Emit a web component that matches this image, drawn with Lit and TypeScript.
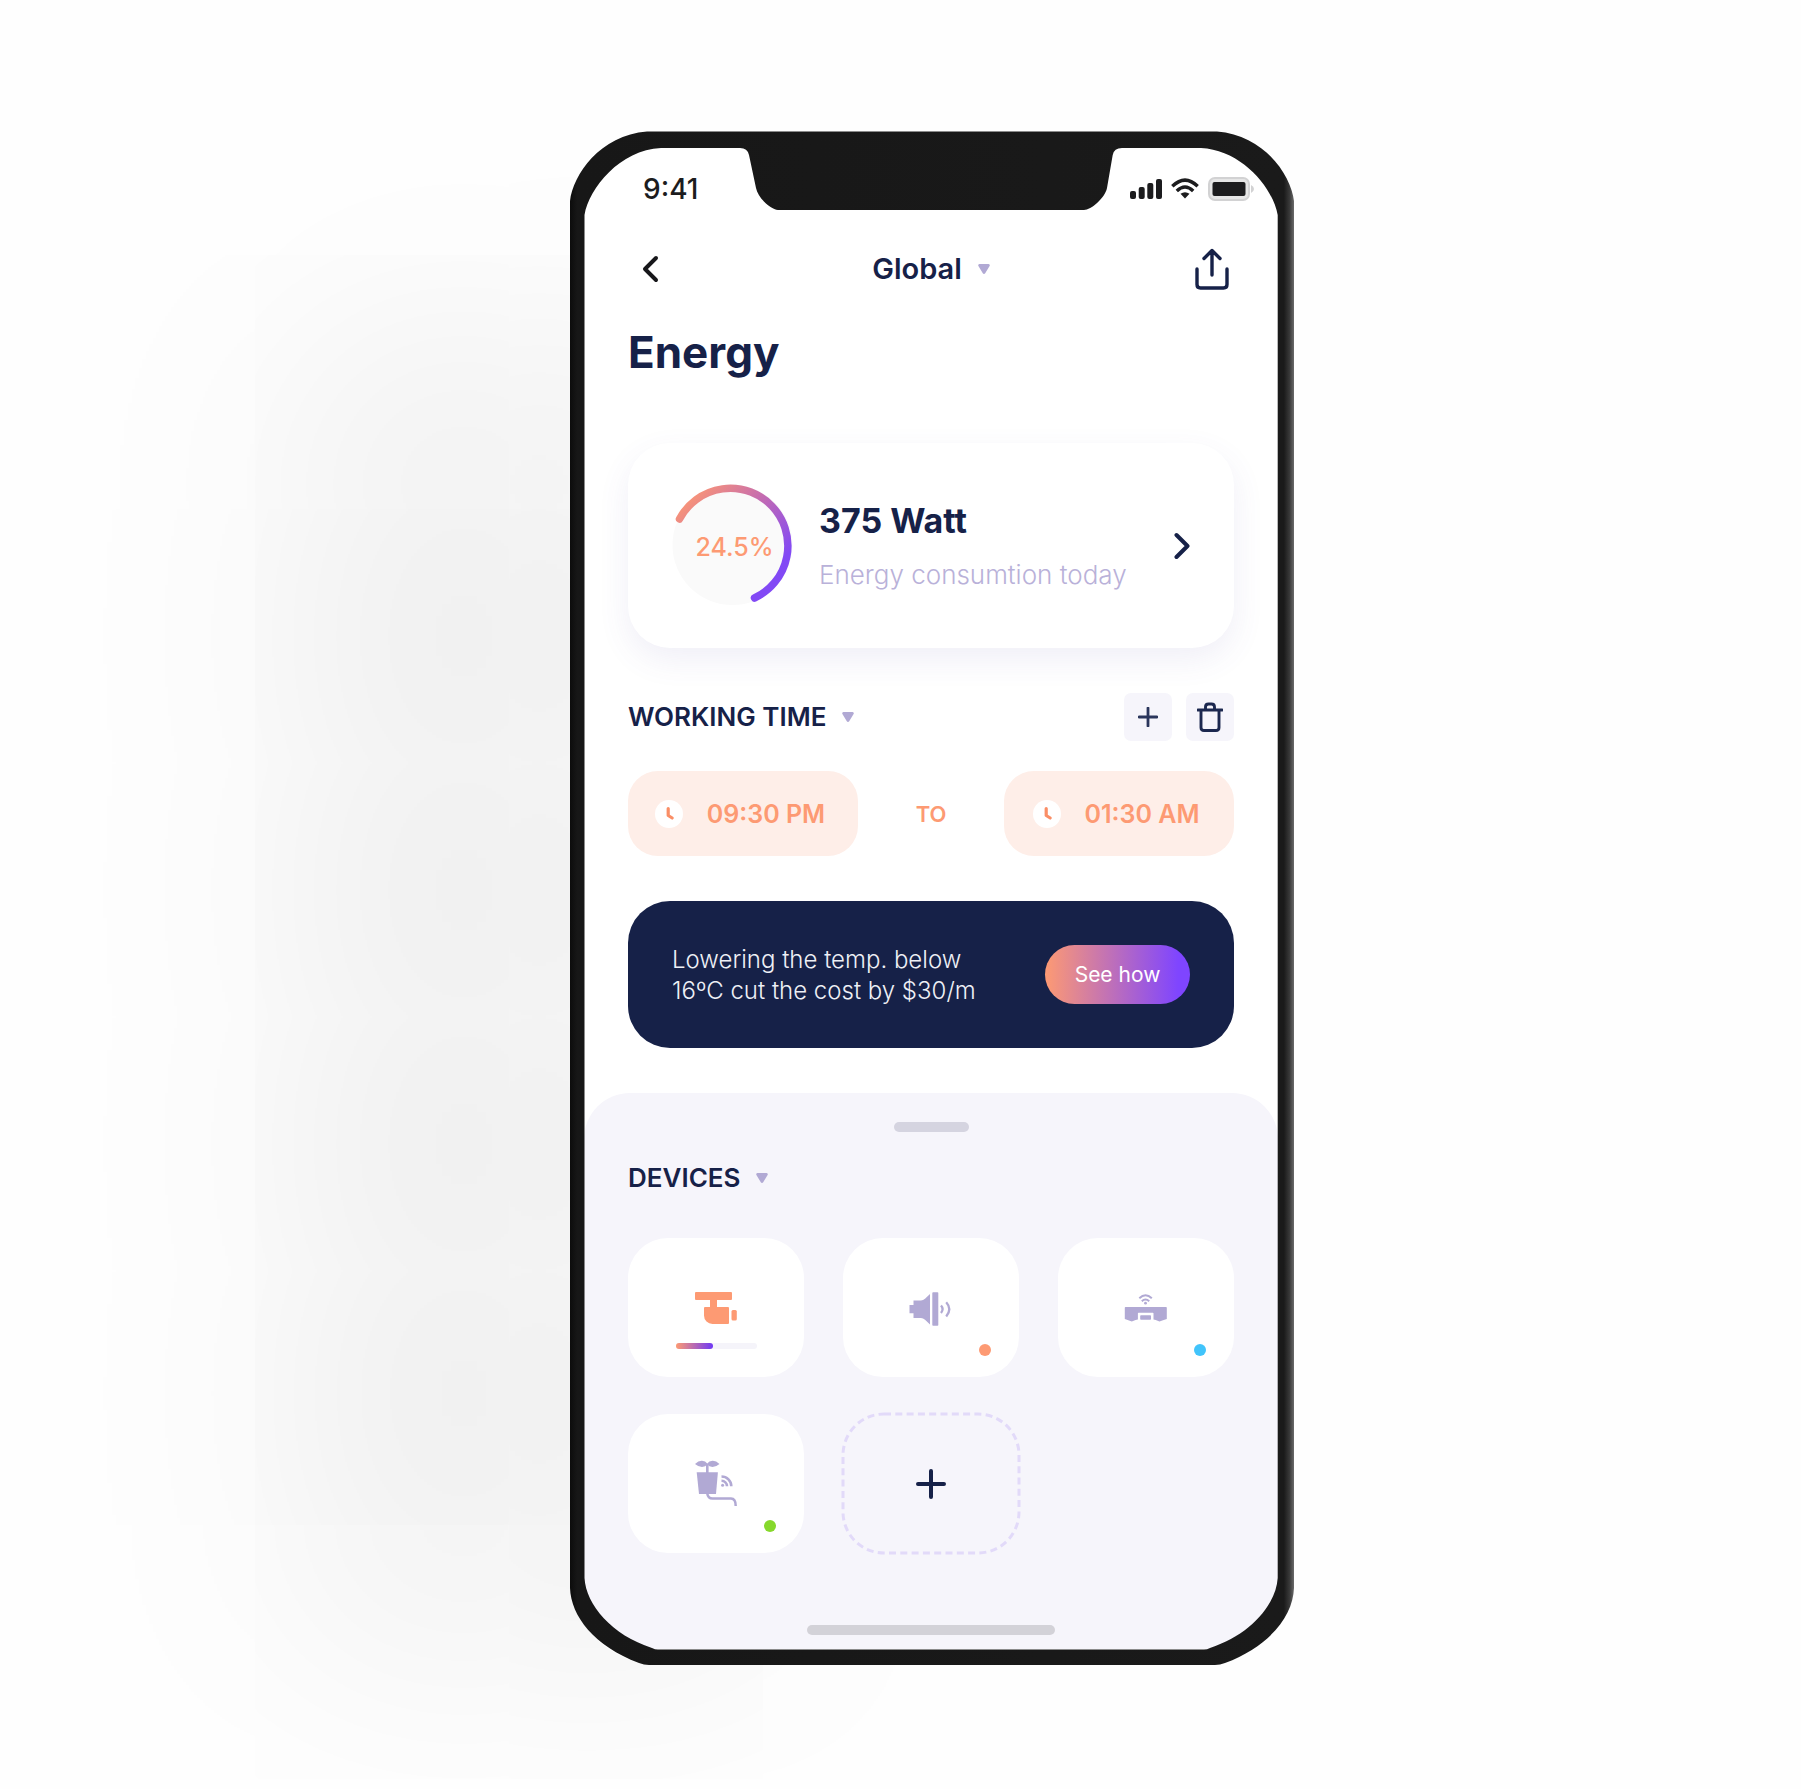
import { LitElement, html, css, svg, nothing } from "lit";
import type { TemplateResult } from "lit";
import { customElement, property } from "lit/decorators.js";

interface Device {
  name: string;
  icon: TemplateResult;
  tone: "active" | "idle";
  dot?: "orange" | "blue" | "green";
  progress?: number;
}

const caret = html`<svg class="caret" viewBox="0 0 12 10" width="12" height="10" aria-hidden="true">
  <path d="M1.5 0h9a1.3 1.3 0 0 1 1.1 2L7.2 9.2a1.4 1.4 0 0 1-2.4 0L.4 2A1.3 1.3 0 0 1 1.5 0z" fill="currentColor" />
</svg>`;

const cameraIcon = svg`
  <g fill="currentColor">
    <rect x="1" y="8" width="37" height="8" rx="1" />
    <rect x="16" y="15" width="7" height="9" />
    <path d="M10 24a1 1 0 0 1 1-1h23a1 1 0 0 1 1 1v15a1 1 0 0 1-1 1H18.500a8.500 8.500 0 0 1-8.500-8.500z" />
    <rect x="37.500" y="26" width="5.300" height="10.500" rx="1.500" />
  </g>`;

const speakerIcon = svg`
  <path d="M.5 21h4v-4.500h7.500q2 0 4-1.800l5-4.700v30.500l-5-4.700q-2-1.800-4-1.800H4.500V29.300h-4z" fill="currentColor" />
  <rect x="23.300" y="8.300" width="6" height="33.400" rx=".8" fill="currentColor" />
  <path d="M32 21.500q3.200 3.500 0 7.500M37.200 18.200q6.200 6.800 0 14.200" fill="none" stroke="currentColor" stroke-width="2.300" />`;

const vacuumIcon = svg`
  <path d="M1.500 23h40.500q.8 0 .8.800V35l-3.800 1.200-3.500 1.300-3.800-1.500-2.200-.5v-6.200q0-.6-.6-.6H14.500q-.6 0-.6.600v6.200l-2.300.5-3.800 1.500-3.500-1.300L.8 35V23.800q0-.8.700-.8z" fill="currentColor" />
  <rect x="16.200" y="31.300" width="10.800" height="4.400" rx=".8" fill="currentColor" />
  <g fill="none" stroke="currentColor" stroke-width="2">
    <path d="M15.300 14.200q6.200-6 12.500 0" />
    <path d="M17.800 17.200q3.700-3.400 7.400 0" />
  </g>
  <circle cx="21.500" cy="19.200" r="1.400" fill="currentColor" />`;

const plantIcon = svg`
  <path d="M1 4Q4.500.6 8 .8 11.500 1 13.300 3.400 15 1 18.500.8 22 .6 25.500 4 22 7 18.500 7 15 6.900 13.300 4.600 11.500 6.900 8 7 4.500 7 1 4z" fill="currentColor" />
  <path d="M13.300 4v9" stroke="currentColor" stroke-width="2.600" fill="none" />
  <path d="M2.700 12.300h21.200L22 34H5z" fill="currentColor" />
  <path d="M13.300 33.500q.6 5 5.200 5h18.500q4.700 0 4.700 7.500" fill="none" stroke="currentColor" stroke-width="2.500" />
  <g fill="none" stroke="currentColor" stroke-width="2.600">
    <path d="M27.500 16.500a9.800 9.800 0 0 1 9.800 9.800" />
    <path d="M27.500 20.800a5.500 5.500 0 0 1 5.500 5.500" />
  </g>
  <circle cx="28.600" cy="25.200" r="1.500" fill="currentColor" />`;

const DEVICES: Device[] = [
  { name: "Camera", icon: cameraIcon, tone: "active", progress: 46 },
  { name: "Speaker", icon: speakerIcon, tone: "idle", dot: "orange" },
  { name: "Robot vacuum", icon: vacuumIcon, tone: "idle", dot: "blue" },
  { name: "Smart planter", icon: plantIcon, tone: "idle", dot: "green" },
];

const base = css`
  *, *::before, *::after { box-sizing: border-box; }
  button { font: inherit; color: inherit; background: none; border: 0; margin: 0; padding: 0; cursor: pointer; }
  svg { display: block; flex: none; }
`;

@customElement("phone-status")
export class PhoneStatus extends LitElement {
  static styles = [base, css`
    :host { display: flex; align-items: center; justify-content: space-between; height: 80px; padding: 0 24px 0 59px; color: #1c1c1e; }
    .time { font-size: 28px; line-height: 32px; font-weight: 500; }
    .signals { display: flex; align-items: center; gap: 9px; }
  `];

  render() {
    return html`
      <span class="time">9:41</span>
      <div class="signals">
        <svg width="32" height="22" viewBox="0 0 32 22" aria-hidden="true" fill="currentColor">
          <rect x="0" y="13" width="6" height="8" rx="2" />
          <rect x="8.700" y="9" width="6" height="12" rx="2" />
          <rect x="17.300" y="5" width="6" height="16" rx="2" />
          <rect x="26" y="1" width="6" height="20" rx="2" />
        </svg>
        <svg width="28" height="22" viewBox="0 0 28 22" aria-hidden="true">
          <g fill="none" stroke="currentColor" stroke-width="3.400">
            <path d="M1.300 8.300Q14-4 26.700 8.300" />
            <path d="M5.800 13Q14 5 22.200 13" />
          </g>
          <path d="M9.500 15.800q4.500-3.200 9 0L14 20.500z" fill="currentColor" />
        </svg>
        <svg width="46" height="24" viewBox="0 0 46 24" aria-hidden="true">
          <rect x="1" y="1" width="40" height="22" rx="6" fill="#e6e6e6" stroke="#d2d2d3" stroke-width="2" />
          <rect x="4.500" y="5" width="33" height="14" rx="2" fill="currentColor" />
          <path d="M43 8q3 1.500 3 4t-3 4z" fill="#d2d2d3" />
        </svg>
      </div>
    `;
  }
}

@customElement("energy-card")
export class EnergyCard extends LitElement {
  @property({ type: String }) percent = "";
  @property({ type: String }) value = "";
  @property({ type: String }) caption = "";

  static styles = [base, css`
    :host { display: block; }
    .card {
      display: flex; align-items: center; width: 100%; min-height: 205px; padding: 0 44px; gap: 25px;
      border-radius: 42px; background: #fff; text-align: left;
      box-shadow: 0 12px 32px rgba(90, 80, 170, 0.09);
    }
    .gauge { display: grid; place-items: center; }
    .gauge > * { grid-area: 1 / 1; }
    .percent { font-size: 25px; line-height: 32px; font-weight: 500; color: #fd9a73; padding: 3px 0 0 3px; }
    .copy { display: flex; flex-direction: column; gap: 18px; flex: 1; white-space: nowrap; }
    .value { font-size: 34px; line-height: 40px; font-weight: 700; color: #162148; }
    .caption { font-size: 26px; line-height: 32px; font-weight: 300; color: #b9b1d9; }
    .go { color: #162148; }
  `];

  render() {
    return html`
      <button class="card" type="button">
        <span class="gauge">
          <svg width="122" height="122" viewBox="0 0 122 122" overflow="visible" aria-hidden="true">
            <defs>
              <linearGradient id="arc" x1="0.1" y1="0.1" x2="0.8" y2="0.8">
                <stop offset="0" stop-color="#f6927a" />
                <stop offset="0.450" stop-color="#c56cb0" />
                <stop offset="1" stop-color="#8249f5" />
              </linearGradient>
            </defs>
            <circle cx="60.500" cy="60" r="60" fill="#fafafa" />
            <path d="M7.500 34A57.500 57.500 0 1 1 82.500 113" fill="none" stroke="url(#arc)" stroke-width="7.500" stroke-linecap="round" />
          </svg>
          <span class="percent">${this.percent}</span>
        </span>
        <span class="copy">
          <span class="value">${this.value}</span>
          <span class="caption">${this.caption}</span>
        </span>
        <svg class="go" width="16" height="28" viewBox="0 0 16 28" aria-hidden="true">
          <path d="M2.500 3L13.500 14 2.500 25" fill="none" stroke="currentColor" stroke-width="4" stroke-linecap="round" stroke-linejoin="round" />
        </svg>
      </button>
    `;
  }
}

@customElement("working-time")
export class WorkingTime extends LitElement {
  @property({ type: String }) from = "";
  @property({ type: String }) to = "";

  static styles = [base, css`
    :host { display: flex; flex-direction: column; gap: 30px; color: #162148; }
    .head { display: flex; align-items: center; justify-content: space-between; }
    h2 { margin: 0; font-size: 26px; line-height: 32px; font-weight: 600; }
    .title { display: flex; align-items: center; gap: 16px; text-transform: uppercase; }
    .caret { color: #b1a9d4; }
    .actions { display: flex; gap: 14px; }
    .action { width: 48px; height: 48px; display: grid; place-items: center; border-radius: 7px; background: #f6f5fb; }
    .range { display: grid; grid-template-columns: 230fr 146fr 230fr; align-items: center; color: #fd9a73; }
    .slot {
      display: flex; align-items: center; justify-content: center; gap: 24px; height: 85px; padding-right: 6px;
      border-radius: 30px; background: #feeee8; font-size: 25px; line-height: 32px; font-weight: 600; white-space: nowrap;
    }
    .to { text-align: center; font-size: 22px; line-height: 32px; font-weight: 600; }
  `];

  private slotButton(time: string, label: string) {
    return html`
      <button class="slot" type="button" aria-label="${label} ${time}">
        <svg width="28" height="28" viewBox="0 0 28 28" aria-hidden="true">
          <circle cx="14" cy="14" r="14" fill="#fff" />
          <path d="M13.200 8.500V15.500L17.200 18" fill="none" stroke="#fa8e66" stroke-width="3.200" stroke-linecap="round" stroke-linejoin="round" />
        </svg>
        <span>${time}</span>
      </button>`;
  }

  render() {
    return html`
      <div class="head">
        <h2><button class="title" type="button">Working time ${caret}</button></h2>
        <div class="actions">
          <button class="action" type="button" aria-label="Add">
            <svg width="20" height="20" viewBox="0 0 20 20" aria-hidden="true">
              <path d="M10 1v18M1 10h18" stroke="#2b365c" stroke-width="2.800" stroke-linecap="round" />
            </svg>
          </button>
          <button class="action" type="button" aria-label="Delete">
            <svg width="26" height="30" viewBox="0 0 26 30" aria-hidden="true" fill="none" stroke="#1c284f" stroke-width="2.900">
              <path d="M1 8h24" stroke-linecap="round" />
              <path d="M4 8v17.500q0 3 3 3h12q3 0 3-3V8M8.500 8V5q0-3 3-3h3q3 0 3 3v3" />
            </svg>
          </button>
        </div>
      </div>
      <div class="range">
        ${this.slotButton(this.from, "From")}
        <span class="to">TO</span>
        ${this.slotButton(this.to, "To")}
      </div>
    `;
  }
}

@customElement("saving-tip")
export class SavingTip extends LitElement {
  static styles = [base, css`
    :host {
      display: flex; align-items: center; justify-content: space-between; gap: 20px; min-height: 147px; padding: 0 44px;
      border-radius: 42px; background: #162148; color: #eef0f6;
    }
    p { margin: 0; font-size: 24px; line-height: 31px; font-weight: 300; white-space: nowrap; }
    .cta {
      width: 145px; height: 59px; border-radius: 30px; color: #fff; font-size: 21px; line-height: 32px; white-space: nowrap;
      background: linear-gradient(90deg, #fd9a73 0%, #7f45ff 92%);
    }
  `];

  render() {
    return html`
      <p>Lowering the temp. below<br />16ºC cut the cost by $30/m</p>
      <button class="cta" type="button">See how</button>
    `;
  }
}

@customElement("device-sheet")
export class DeviceSheet extends LitElement {
  @property({ attribute: false }) devices: Device[] = [];

  static styles = [base, css`
    :host {
      display: flex; flex-direction: column; padding: 29px 44px 14px; background: #f6f5fb;
      border-radius: 46px 46px 0 0; color: #162148;
    }
    .handle { align-self: center; width: 75px; height: 10px; border-radius: 5px; background: #d5d4e0; }
    h2 { margin: 30px 0 44px; font-size: 26px; line-height: 32px; font-weight: 600; }
    .title { display: flex; align-items: center; gap: 16px; text-transform: uppercase; }
    .caret { color: #b1a9d4; }
    .grid { display: grid; grid-template-columns: repeat(3, 1fr); gap: 37px 39px; }
    .tile { position: relative; display: grid; place-items: center; height: 139px; border-radius: 40px; background: #fff; }
    .active { color: #fd9a73; }
    .idle { color: #b1a9d4; }
    .dot { position: absolute; right: 28px; bottom: 21px; width: 12px; height: 12px; border-radius: 50%; }
    .orange { background: #fd9a73; }
    .blue { background: #41c4fb; }
    .green { background: #86d82c; }
    .meter { position: absolute; left: 48px; right: 47px; bottom: 28px; height: 6px; border-radius: 3px; background: #f5f4fa; }
    .fill { display: block; height: 100%; border-radius: 3px; background: linear-gradient(90deg, #fd9a73, #6f38f5); }
    .add { background: none; }
    .dashes { position: absolute; inset: -2px; width: calc(100% + 4px); height: calc(100% + 4px); overflow: visible; }
    .home { align-self: center; width: 248px; height: 10px; margin-top: 72px; border-radius: 5px; background: #d3d2d8; }
  `];

  render() {
    return html`
      <span class="handle"></span>
      <h2><button class="title" type="button">Devices ${caret}</button></h2>
      <div class="grid">
        ${this.devices.map((d) => html`
          <button class="tile ${d.tone}" type="button" aria-label=${d.name}>
            <svg width="44" height="48" viewBox="0 0 44 48" aria-hidden="true">${d.icon}</svg>
            ${d.dot ? html`<span class="dot ${d.dot}"></span>` : nothing}
            ${d.progress !== undefined
              ? html`<span class="meter"><span class="fill" style="width:${d.progress}%"></span></span>`
              : nothing}
          </button>`)}
        <button class="tile add" type="button" aria-label="Add device">
          <svg class="dashes" viewBox="0 0 180 143" preserveAspectRatio="none" aria-hidden="true">
            <rect x="2" y="2" width="176" height="139" rx="41" fill="none" stroke="#e2daf9" stroke-width="3" stroke-dasharray="7 4.300" />
          </svg>
          <svg width="30" height="30" viewBox="0 0 30 30" aria-hidden="true">
            <path d="M15 2v26M2 15h26" stroke="#162148" stroke-width="4" stroke-linecap="round" />
          </svg>
        </button>
      </div>
      <span class="home"></span>
    `;
  }
}

@customElement("app-root")
export class AppRoot extends LitElement {
  static styles = [base, css`
    :host {
      box-sizing: border-box; display: grid; grid-template-columns: 570fr 724fr 507fr; align-content: start; min-height: 100vh;
      padding: 131px 0 96px; overflow: hidden; background: #fefefe; color: #162148;
      font-family: Inter, "Open Sans", sans-serif;
    }
    .phone { grid-column: 2; position: relative; padding: 18px 16px 16px 14px; }
    .phone::before {
      content: ""; position: absolute; z-index: 0; inset: 0; border-radius: 90px;
      box-shadow: -390px 90px 290px -110px rgba(0, 0, 0, 0.062);
    }
    .screen { position: relative; overflow: hidden; border-radius: 56px; background: #fff; }
    .frame { position: absolute; inset: 0; width: 100%; height: 100%; pointer-events: none; }
    .nav { display: grid; grid-template-columns: 1fr auto 1fr; align-items: center; height: 80px; padding: 0 49px; }
    .back { justify-self: start; padding: 0 8px; color: #17171a; }
    .share { justify-self: end; }
    .place { display: flex; align-items: center; gap: 16px; font-size: 29px; line-height: 32px; font-weight: 600; }
    .caret { color: #b1a9d4; }
    .body { display: flex; flex-direction: column; gap: 45px; padding: 19px 44px 45px; }
    h1 { margin: 0 0 22px; font-size: 44px; line-height: 48px; font-weight: 700; }
  `];

  render() {
    return html`
      <main class="phone">
        <div class="screen">
          <phone-status></phone-status>
          <nav class="nav">
            <button class="back" type="button" aria-label="Back">
              <svg width="18" height="28" viewBox="0 0 18 28" aria-hidden="true">
                <path d="M15 3L4 14 15 25" fill="none" stroke="currentColor" stroke-width="4" stroke-linecap="round" stroke-linejoin="round" />
              </svg>
            </button>
            <button class="place" type="button">Global ${caret}</button>
            <button class="share" type="button" aria-label="Share">
              <svg width="34" height="42" viewBox="0 0 34 42" aria-hidden="true" fill="none" stroke="#162148" stroke-width="3.400" stroke-linecap="round" stroke-linejoin="round">
                <path d="M2 21v15.500q0 3.500 3.500 3.500h23q3.500 0 3.500-3.500V21M17 27V3M9 10.500L17 2.500l8 8" />
              </svg>
            </button>
          </nav>
          <div class="body">
            <h1>Energy</h1>
            <energy-card percent="24.5%" value="375 Watt" caption="Energy consumtion today"></energy-card>
            <working-time from="09:30 PM" to="01:30 AM"></working-time>
            <saving-tip></saving-tip>
          </div>
          <device-sheet .devices=${DEVICES}></device-sheet>
        </div>
        <svg class="frame" viewBox="0 0 724 1534" preserveAspectRatio="none" aria-hidden="true">
          <defs>
            <linearGradient id="edge" x1="0" x2="1" y1="0" y2="0">
              <stop offset="0" stop-color="#0c0c0c" />
              <stop offset="0.010" stop-color="#171717" />
              <stop offset="0.986" stop-color="#1a1a1a" />
              <stop offset="0.994" stop-color="#3a3a3a" />
              <stop offset="1" stop-color="#6a6a6a" />
            </linearGradient>
          </defs>
          <path fill="url(#edge)" fill-rule="evenodd"
            d="M0 70C3 44 30 4 77 .5H647C694 4 721 44 724 70V1457C723 1485 700 1515 655 1532Q650 1534 645 1534H79Q74 1534 69 1532C24 1515 1 1485 0 1457Z
               M14.500 84V1447C16 1474 42 1504 82 1517Q85 1518.500 88 1518.500H634Q637 1518.500 640 1517C680 1504 706 1474 707.700 1447V84C703 57 672 19 631 17H552Q544 17 542.700 24L537 57C535 67 521 79 514 79H208C201 79 188 67 186 57L179 24Q177.500 17 170 17H91C50 19 19 57 14.500 84Z" />
        </svg>
      </main>
    `;
  }
}
